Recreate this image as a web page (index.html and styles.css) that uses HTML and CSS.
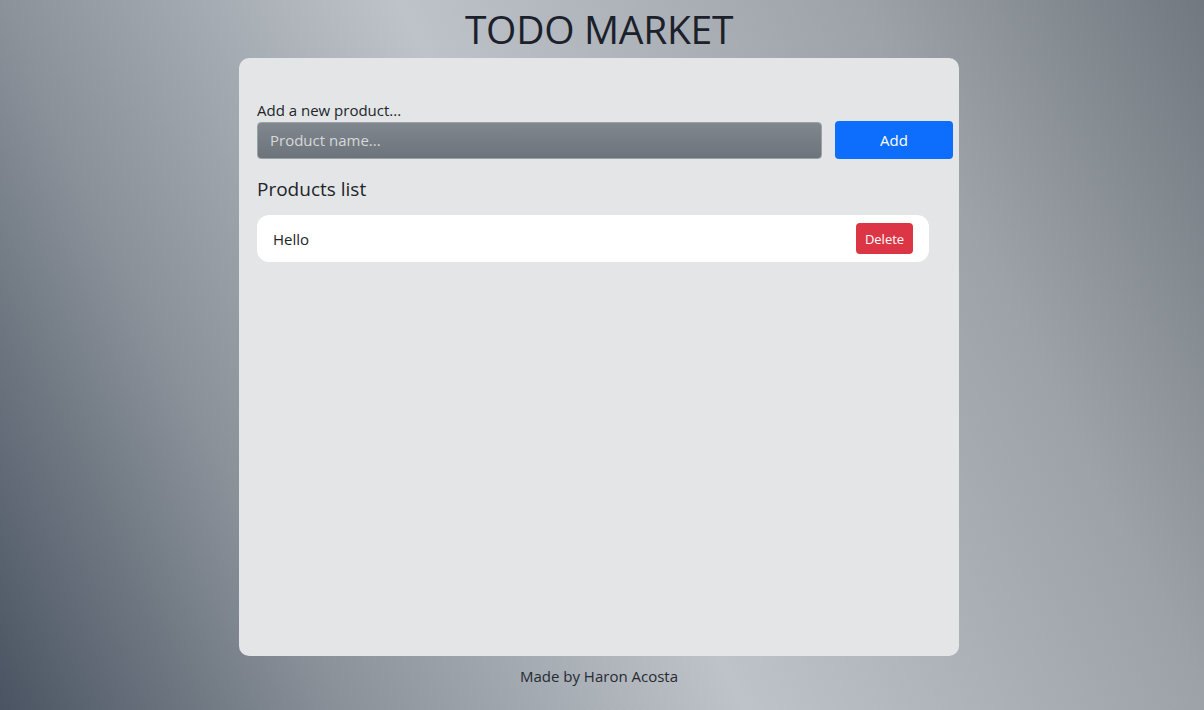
FILE: index.html
```html
<!DOCTYPE html>
<html lang="en">
<head>
<meta charset="utf-8">
<title>TODO MARKET</title>
<link rel="stylesheet" href="styles.css">
</head>
<body>
  <h1 class="title">TODO MARKET</h1>
  <main class="card">
    <form class="add-form">
      <label class="add-label" for="product">Add a new product...</label>
      <div class="add-row">
        <input class="add-input" id="product" type="text" placeholder="Product name...">
        <button class="btn btn-add" type="button">Add</button>
      </div>
    </form>
    <h2 class="list-title">Products list</h2>
    <ul class="product-list">
      <li class="product-item">
        <span class="product-name">Hello</span>
        <button class="btn btn-delete" type="button">Delete</button>
      </li>
    </ul>
  </main>
  <footer class="footer">Made by Haron Acosta</footer>
</body>
</html>
```

FILE: styles.css
```css
* {
  box-sizing: border-box;
}

html, body {
  height: 100%;
}

body {
  margin: 0;
  padding-right: 6px;
  min-height: 710px;
  font-family: "Open Sans", "Noto Sans", sans-serif;
  color: #212529;
  background: linear-gradient(64deg, #4a5462 0%, #8a9199 22%, #bec3c9 48%, #9da2a9 78%, #72787f 100%);
  display: flex;
  flex-direction: column;
  align-items: center;
}

.title {
  margin: 0;
  height: 58px;
  line-height: 58px;
  font-size: 39px;
  font-weight: 400;
  color: #1b212b;
  letter-spacing: -0.3px;
}

.card {
  width: 720px;
  height: 598px;
  background: #e4e5e7;
  border-radius: 10px;
  padding: 41px 18px 40px;
}

.add-form {
  display: flex;
  flex-direction: column;
}

.add-label {
  font-size: 15px;
  line-height: 22px;
  height: 22px;
}

.add-row {
  display: flex;
  align-items: center;
  gap: 13px;
  width: 696px;
}

.add-input {
  width: 565px;
  height: 37px;
  border: 1px solid #9ca1a6;
  border-radius: 4px;
  background: linear-gradient(180deg, #81878e 0%, #6c737a 100%);
  padding: 0 12px;
  font-family: inherit;
  font-size: 15px;
  color: #f2f3f4;
  outline: none;
}

.add-input::placeholder {
  color: #d5d8db;
}

.btn {
  border: none;
  font-family: inherit;
  color: #ffffff;
  cursor: pointer;
}

.btn-add {
  width: 118px;
  height: 38px;
  background: #0d6efd;
  border-radius: 4px;
  font-size: 15px;
}

.list-title {
  margin: 15px 0 11px;
  font-size: 19px;
  font-weight: 400;
  line-height: 30px;
}

.product-list {
  list-style: none;
  margin: 0;
  padding: 0;
}

.product-item {
  width: 672px;
  height: 47px;
  background: #ffffff;
  border-radius: 12px;
  padding: 0 16px;
  display: flex;
  align-items: center;
  justify-content: space-between;
}

.product-name {
  font-size: 15px;
}

.btn-delete {
  width: 57px;
  height: 31px;
  background: #dc3545;
  border-radius: 4px;
  font-size: 13px;
  padding: 0;
}

.footer {
  margin-top: 8px;
  font-size: 15px;
  line-height: 24px;
  color: #262b33;
}
```
